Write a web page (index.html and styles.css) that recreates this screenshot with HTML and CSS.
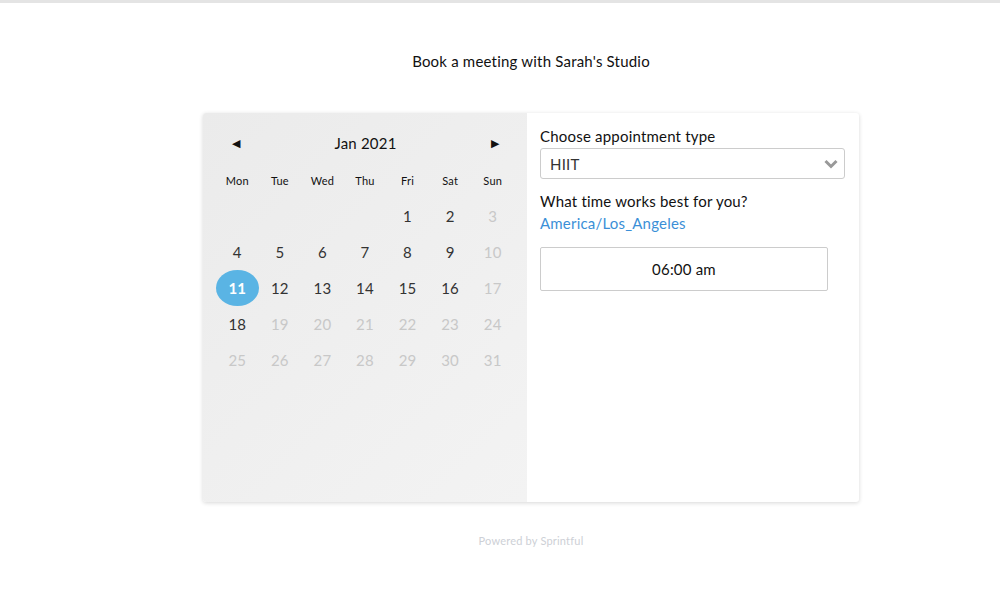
FILE: index.html
```html
<!DOCTYPE html>
<html lang="en">
<head>
  <meta charset="UTF-8">
  <title>Book a meeting with Sarah's Studio</title>
  <link rel="stylesheet" href="styles.css">
</head>
<body>
  <div class="topbar"></div>

  <div class="page">
    <h1 class="title">Book a meeting with Sarah's Studio</h1>

    <div class="card">
      <div class="calendar">
        <div class="cal-head">
          <span class="arrow">&#9664;</span>
          <span class="month">Jan 2021</span>
          <span class="arrow">&#9654;</span>
        </div>
        <div class="grid days">
          <div>Mon</div><div>Tue</div><div>Wed</div><div>Thu</div><div>Fri</div><div>Sat</div><div>Sun</div>
        </div>
        <div class="grid dates">
          <div></div><div></div><div></div><div></div>
          <div>1</div><div>2</div><div class="off">3</div>
          <div>4</div><div>5</div><div>6</div><div>7</div><div>8</div><div>9</div><div class="off">10</div>
          <div class="sel">11</div><div>12</div><div>13</div><div>14</div><div>15</div><div>16</div><div class="off">17</div>
          <div>18</div><div class="off">19</div><div class="off">20</div><div class="off">21</div><div class="off">22</div><div class="off">23</div><div class="off">24</div>
          <div class="off">25</div><div class="off">26</div><div class="off">27</div><div class="off">28</div><div class="off">29</div><div class="off">30</div><div class="off">31</div>
        </div>
      </div>

      <div class="details">
        <label class="label">Choose appointment type</label>
        <div class="select">
          <span>HIIT</span>
          <svg class="chev" width="14" height="10" viewBox="0 0 14 10">
            <path d="M1.5 2 L7 7.5 L12.5 2" fill="none" stroke="#999" stroke-width="3"/>
          </svg>
        </div>
        <div class="label q">What time works best for you?</div>
        <a class="tz">America/Los_Angeles</a>
        <button class="slot">06:00 am</button>
      </div>
    </div>

    <div class="footer">Powered by Sprintful</div>
  </div>
</body>
</html>
```

FILE: styles.css
```css
body {
  margin: 0;
  font-family: Lato, "Open Sans", sans-serif;
  color: #111;
  background: #fff;
}
.topbar {
  height: 3px;
  background: #e4e4e4;
}
.page {
  padding-left: 62px;
  letter-spacing: 0.2px;
}
.title {
  font-size: 15px;
  font-weight: normal;
  text-align: center;
  margin: 48px 0 42px;
  line-height: 20px;
}
.card {
  display: flex;
  width: 656px;
  height: 389px;
  margin: 0 auto;
  border-radius: 3px;
  box-shadow: 0 1px 4px rgba(0, 0, 0, 0.16);
  background: #fff;
}
.calendar {
  width: 298px;
  padding: 15px 13px 0;
  background: linear-gradient(135deg, #ebebeb, #f3f3f3);
  border-radius: 3px 0 0 3px;
}
.cal-head {
  display: flex;
  justify-content: space-between;
  align-items: center;
  padding: 0 15px 0 16px;
  height: 30px;
}
.arrow {
  font-size: 11px;
  color: #111;
}
.month {
  font-size: 15px;
}
.grid {
  display: grid;
  grid-template-columns: repeat(7, 1fr);
  text-align: center;
}
.days {
  margin-top: 16px;
  font-size: 11px;
  line-height: 14px;
}
.dates {
  margin-top: 10px;
  grid-auto-rows: 36px;
  font-size: 15px;
}
.dates div {
  display: flex;
  align-items: center;
  justify-content: center;
  color: #333;
}
.dates .off {
  color: #c8c8c8;
}
.dates .sel {
  background: #5ab4e4;
  color: #fff;
  border-radius: 50%;
  font-weight: bold;
}
.details {
  flex: 1;
  padding: 14px 14px 0 13px;
}
.label {
  display: block;
  font-size: 15px;
  line-height: 18px;
}
.select {
  display: flex;
  justify-content: space-between;
  align-items: center;
  height: 29px;
  margin-top: 3px;
  padding: 0 6px 0 9px;
  border: 1px solid #ccc;
  border-radius: 3px;
  font-size: 15px;
  color: #333;
}
.q {
  margin-top: 13px;
}
.tz {
  display: block;
  margin-top: 4px;
  font-size: 15px;
  color: #3b8fd7;
}
.slot {
  display: block;
  width: 288px;
  height: 44px;
  margin-top: 15px;
  border: 1px solid #ccc;
  border-radius: 2px;
  background: #fff;
  font-family: inherit;
  font-size: 15px;
  letter-spacing: 0.2px;
  color: #111;
}
.footer {
  text-align: center;
  margin-top: 32px;
  font-size: 11px;
  color: #cdd0d6;
}
```
